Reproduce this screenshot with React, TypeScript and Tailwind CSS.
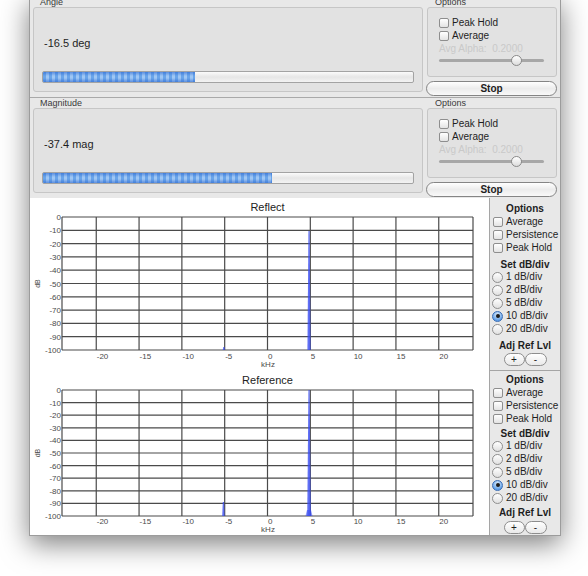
import type { ReactNode } from "react"

const KHZ_LINES = [-20, -15, -10, -5, 0, 5, 10, 15, 20]
const DB_TICKS = [0, -10, -20, -30, -40, -50, -60, -70, -80, -90, -100]
const PLOT_LEFT = 32
const PLOT_W = 411

const xOf = (khz: number) => PLOT_LEFT + ((khz + 24) * PLOT_W) / 48

function Checkbox() {
  return (
    <span className="inline-block h-[10px] w-[10px] shrink-0 rounded-[2px] border border-[#8e8e8e] bg-[linear-gradient(#ffffff,#e3e3e3)]" />
  )
}

function Radio({ checked }: { checked?: boolean }) {
  if (checked) {
    return (
      <span className="flex h-[11px] w-[11px] shrink-0 items-center justify-center rounded-full border border-[#3a6db5] bg-[radial-gradient(circle_at_50%_30%,#e0eefc,#5c9ce6_75%)]">
        <span className="h-[4px] w-[4px] rounded-full bg-[#1b1b1b]" />
      </span>
    )
  }
  return (
    <span className="h-[11px] w-[11px] shrink-0 rounded-full border border-[#8e8e8e] bg-[linear-gradient(#ffffff,#e0e0e0)]" />
  )
}

function MeterSection({ label, value, fill }: { label: string; value: string; fill: number }) {
  return (
    <div className="flex h-[101px] border-t border-[#a9a9a9] pl-[3px]">
      <div className="w-[390px]">
        <div className="h-[10px] pl-[7px] text-[9px] leading-[10px] text-[#3a3a3a]">{label}</div>
        <div className="h-[85px] rounded-[3px] border border-[#c6c6c6] bg-[#e2e2e2] px-[8px] pt-[29px]">
          <div className="ml-[2px] text-[11px] leading-[13px] text-[#1e1e1e]">{value}</div>
          <div className="mt-[21px] h-[12px] overflow-hidden rounded-[2px] border border-[#a3a3a3] bg-[linear-gradient(#fbfbfb,#e6e6e6_50%,#f3f3f3)]">
            <div
              className="h-full bg-[linear-gradient(rgba(35,95,205,0.55),rgba(255,255,255,0)_40%,rgba(255,255,255,0)_60%,rgba(35,95,205,0.55)),repeating-linear-gradient(90deg,#6aa5ea_0px,#6aa5ea_3px,#9fc7f4_3px,#9fc7f4_6px)]"
              style={{ width: `${fill}%` }}
            />
          </div>
        </div>
      </div>
      <div className="ml-[4px] w-[130px]">
        <div className="h-[10px] pl-[8px] text-[9px] leading-[10px] text-[#3a3a3a]">Options</div>
        <div className="h-[70px] rounded-[3px] border border-[#c6c6c6] bg-[#e2e2e2] pl-[11px] pt-[8px] text-[10px] text-[#1e1e1e]">
          <div className="flex h-[13px] items-center gap-[3px]">
            <Checkbox />
            <span>Peak Hold</span>
          </div>
          <div className="flex h-[13px] items-center gap-[3px]">
            <Checkbox />
            <span>Average</span>
          </div>
          <div className="h-[13px] whitespace-pre leading-[13px] text-[#c9c9c9]">Avg Alpha:  0.2000</div>
          <div className="relative h-[11px] w-[105px]">
            <div className="absolute left-0 right-0 top-[4px] h-[3px] rounded-full bg-[#a7a7a7]" />
            <div className="absolute left-[72px] top-0 h-[11px] w-[11px] rounded-full border border-[#8a8a8a] bg-[linear-gradient(#ffffff,#dcdcdc)]" />
          </div>
        </div>
        <button className="-ml-[1px] mt-[4px] block h-[15px] w-[131px] rounded-full border border-[#858585] bg-[linear-gradient(#ffffff,#ececec_50%,#f9f9f9)] text-[10px] font-bold leading-[13px] text-[#1e1e1e]">
          Stop
        </button>
      </div>
    </div>
  )
}

type Spike = { khz: number; top: number; w: number; base?: boolean }

function Plot({ title, height, plotH, labelGap, spikes }: { title: string; height: number; plotH: number; labelGap: number; spikes: Spike[] }) {
  const step = plotH / 10
  return (
    <div className="flex flex-col" style={{ height }}>
      <div className="h-[19px] pl-[16px] pt-[3px] text-center text-[11px] leading-[13px] text-[#222]">{title}</div>
      <svg width={459} height={height - 19} className="overflow-visible">
        {DB_TICKS.map((db, i) => (
          <g key={db}>
            <line x1={PLOT_LEFT} x2={PLOT_LEFT + PLOT_W} y1={i * step} y2={i * step} stroke="#4a4a4a" strokeWidth={1.2} />
            <text x={PLOT_LEFT - 1} y={i * step + 3} fontSize={8} fill="#4a4a4a" textAnchor="end">
              {db === 0 ? "0" : `-${-db}`}
            </text>
          </g>
        ))}
        {KHZ_LINES.map((k) => (
          <g key={k}>
            <line x1={xOf(k)} x2={xOf(k)} y1={0} y2={plotH} stroke="#4a4a4a" strokeWidth={1.2} />
            <text x={xOf(k) + 0.5} y={plotH + labelGap} fontSize={8} fill="#4a4a4a">
              {k}
            </text>
          </g>
        ))}
        <line x1={PLOT_LEFT} x2={PLOT_LEFT} y1={0} y2={plotH} stroke="#4a4a4a" strokeWidth={1.2} />
        <line x1={PLOT_LEFT + PLOT_W} x2={PLOT_LEFT + PLOT_W} y1={0} y2={plotH} stroke="#4a4a4a" strokeWidth={1.2} />
        <text x={10} y={plotH / 2} fontSize={7} fill="#4a4a4a" textAnchor="middle" transform={`rotate(-90 10 ${plotH / 2})`}>
          dB
        </text>
        <text x={xOf(0) + 0.5} y={plotH + labelGap + 8} fontSize={8} fill="#4a4a4a" textAnchor="middle">
          kHz
        </text>
        {spikes.map((s, i) => {
          const x = xOf(s.khz)
          return (
            <g key={i}>
              <polygon
                points={`${x - s.w},${plotH} ${x - 0.6},${s.top} ${x + 0.6},${s.top} ${x + s.w},${plotH}`}
                fill="#3a4cf2"
                fillOpacity={0.8}
              />
              {s.base && (
                <polygon
                  points={`${x - 3.5},${plotH} ${x - 2},${plotH - 6} ${x + 2},${plotH - 6} ${x + 3.5},${plotH}`}
                  fill="#3a4cf2"
                  fillOpacity={0.6}
                />
              )}
            </g>
          )
        })}
      </svg>
    </div>
  )
}

function SideRow({ children }: { children: ReactNode }) {
  return <div className="flex h-[13px] items-center gap-[3px] whitespace-nowrap">{children}</div>
}

function SidePanel({ tight, height }: { tight?: boolean; height: number }) {
  return (
    <div
      className={`flex flex-col text-[10px] leading-[12px] text-[#1e1e1e] ${tight ? "pt-[3px]" : "border-b border-[#a5a5a5] pt-[5px]"}`}
      style={{ height }}
    >
      <div className="text-center font-bold">Options</div>
      <div className="pl-[3px] pt-[0.5px]">
        <SideRow><Checkbox /><span>Average</span></SideRow>
        <SideRow><Checkbox /><span>Persistence</span></SideRow>
        <SideRow><Checkbox /><span>Peak Hold</span></SideRow>
      </div>
      <div className={`text-center font-bold ${tight ? "mt-[2px]" : "mt-[4px]"}`}>Set dB/div</div>
      <div className="pl-[2px]">
        {["1 dB/div", "2 dB/div", "5 dB/div", "10 dB/div", "20 dB/div"].map((t) => (
          <SideRow key={t}>
            <Radio checked={t === "10 dB/div"} />
            <span>{t}</span>
          </SideRow>
        ))}
      </div>
      <div className={`text-center font-bold ${tight ? "mt-[2px]" : "mt-[4px]"}`}>Adj Ref Lvl</div>
      <div className={`flex justify-center ${tight ? "mt-[2px]" : "mt-[1px]"}`}>
        <button className="h-[13px] w-[21px] rounded-full border border-[#8d8d8d] bg-[linear-gradient(#ffffff,#e9e9e9)] text-[10px] leading-[11px]">+</button>
        <button className="h-[13px] w-[22px] rounded-full border border-[#8d8d8d] bg-[linear-gradient(#ffffff,#e9e9e9)] text-[10px] leading-[11px]">-</button>
      </div>
    </div>
  )
}

export default function App() {
  return (
    <div className="h-[576px] w-[588px] overflow-hidden bg-white font-['Liberation_Sans',Arial,sans-serif]">
      <div className="-mt-[4px] ml-[29px] w-[532px] border-x border-b border-[#9c9c9c] bg-[#e8e8e8] shadow-[0_8px_26px_rgba(0,0,0,0.5)]">
        <MeterSection label="Angle" value="-16.5 deg" fill={41} />
        <MeterSection label="Magnitude" value="-37.4 mag" fill={62} />
        <div className="flex">
          <div className="w-[459px] bg-white">
            <Plot
              title="Reflect"
              height={173}
              plotH={133}
              labelGap={9}
              spikes={[
                { khz: 4.85, top: 14, w: 1.6 },
                { khz: -5.1, top: 130, w: 1 },
              ]}
            />
            <Plot
              title="Reference"
              height={164}
              plotH={126}
              labelGap={8}
              spikes={[
                { khz: 4.85, top: 0, w: 1.8, base: true },
                { khz: -5.15, top: 112, w: 1.2 },
              ]}
            />
          </div>
          <div className="w-[71px] border-l border-[#a5a5a5]">
            <SidePanel height={173} />
            <SidePanel height={164} tight />
          </div>
        </div>
      </div>
    </div>
  )
}
